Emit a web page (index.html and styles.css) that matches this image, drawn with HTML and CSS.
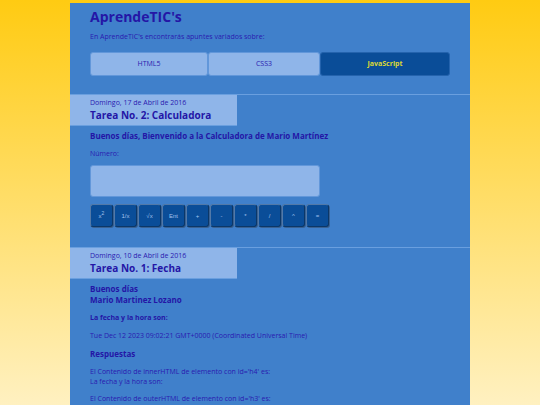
FILE: index.html
```html
<!DOCTYPE html>
<html lang="es">
<head>
    <meta charset="UTF-8">
    <meta name="viewport" content="width=device-width, initial-scale=1">
    <title>AprendeTIC's</title>
    <link rel="stylesheet" href="styles.css">
</head>
<body>
<div class="contenedor">
    <header class="cabecera">
        <h1>AprendeTIC's</h1>
        <p>En AprendeTIC's encontrarás apuntes variados sobre:</p>
        <nav class="menu">
            <a href="#html5">HTML5</a>
            <a href="#css3">CSS3</a>
            <a href="#javascript" class="activo">JavaScript</a>
        </nav>
    </header>

    <article class="tarea">
        <div class="titulo">
            <time datetime="2016-04-17">Domingo, 17 de Abril de 2016</time>
            <h2>Tarea No. 2: Calculadora</h2>
        </div>
        <div class="contenido">
            <h3>Buenos días, Bienvenido a la Calculadora de Mario Martínez</h3>
            <form class="calculadora">
                <label for="numero">Número:</label>
                <input type="text" id="numero" class="numero">
                <div class="botones">
                    <button type="button"><span>x<sup>2</sup></span></button>
                    <button type="button">1/x</button>
                    <button type="button">√x</button>
                    <button type="button">Ent</button>
                    <button type="button">+</button>
                    <button type="button">-</button>
                    <button type="button">*</button>
                    <button type="button">/</button>
                    <button type="button">^</button>
                    <button type="button">=</button>
                </div>
            </form>
        </div>
    </article>

    <article class="tarea">
        <div class="titulo">
            <time datetime="2016-04-10">Domingo, 10 de Abril de 2016</time>
            <h2>Tarea No. 1: Fecha</h2>
        </div>
        <div class="contenido">
            <h3>Buenos días<br>Mario Martinez Lozano</h3>
            <h4>La fecha y la hora son:</h4>
            <p>Tue Dec 12 2023 09:02:21 GMT+0000 (Coordinated Universal Time)</p>
            <h3>Respuestas</h3>
            <p>El Contenido de innerHTML de elemento con id='h4' es:<br>La fecha y la hora son:</p>
            <p>El Contenido de outerHTML de elemento con id='h3' es:</p>
        </div>
    </article>
</div>
</body>
</html>
```
FILE: styles.css
```css
* {
    box-sizing: border-box;
}

html {
    min-height: 100%;
    background: linear-gradient(#ffcb12, #fff3cc);
}

body {
    margin: 0;
    padding-top: 3px;
    font-family: "Open Sans", "Noto Sans", sans-serif;
    font-size: 7px;
    line-height: 10px;
    color: #2a1ab0;
}

h1, h2, h3, h4, p {
    margin: 0;
}

.contenedor {
    max-width: 400px;
    margin: 0 auto;
    background: #4080cb;
}

.cabecera {
    padding: 4px 20px 18px;
}

.cabecera h1 {
    margin-bottom: 6px;
    font-size: 14px;
    line-height: 19px;
    color: #2416a6;
}

.menu {
    display: grid;
    grid-template-columns: 118fr 112fr 130fr;
    margin-top: 10px;
}

.menu a {
    padding: 6px 0;
    border: 1px solid #6297da;
    border-radius: 3px;
    background: #8fb5e9;
    color: #2a1ab0;
    text-align: center;
    text-decoration: none;
}

.menu .activo {
    border-color: #2463ad;
    background: #0a4d98;
    color: #ddd834;
    font-weight: bold;
}

.tarea {
    border-top: 1px solid #6a9fdf;
}

.titulo {
    width: 167px;
    padding: 3px 0 3px 20px;
    border-bottom: 1px solid #6a9fdf;
    background: #8fb5e9;
}

.titulo time {
    display: block;
}

.titulo h2 {
    font-size: 10px;
    line-height: 14px;
    color: #2416a6;
}

.contenido {
    padding: 4px 20px 20px;
}

.contenido h3 {
    margin-bottom: 8px;
    font-size: 8px;
    line-height: 11px;
    color: #2416a6;
}

.contenido h4 {
    margin-bottom: 8px;
    color: #2416a6;
}

.contenido p {
    margin-bottom: 7px;
}

.calculadora label {
    display: block;
    margin-bottom: 6px;
}

.numero {
    display: block;
    width: 64%;
    height: 32px;
    padding: 4px;
    border: 1px solid #6297da;
    border-radius: 3px;
    background: #8fb5e9;
    font: inherit;
    color: inherit;
}

.botones {
    display: flex;
    gap: 1px;
    margin-top: 7px;
}

.botones button {
    width: 23px;
    height: 23px;
    padding: 0;
    border: 1px solid;
    border-color: #5279a8 #0b3768 #0b3768 #5279a8;
    border-radius: 3px;
    box-shadow: 1px 1px 0 #3a6191;
    background: #0a4d98;
    color: #a3c3ee;
    font-family: "Liberation Sans", Arial, sans-serif;
    font-size: 6px;
    line-height: 8px;
}

.botones sup {
    font-size: 5px;
    line-height: 0;
}
```
